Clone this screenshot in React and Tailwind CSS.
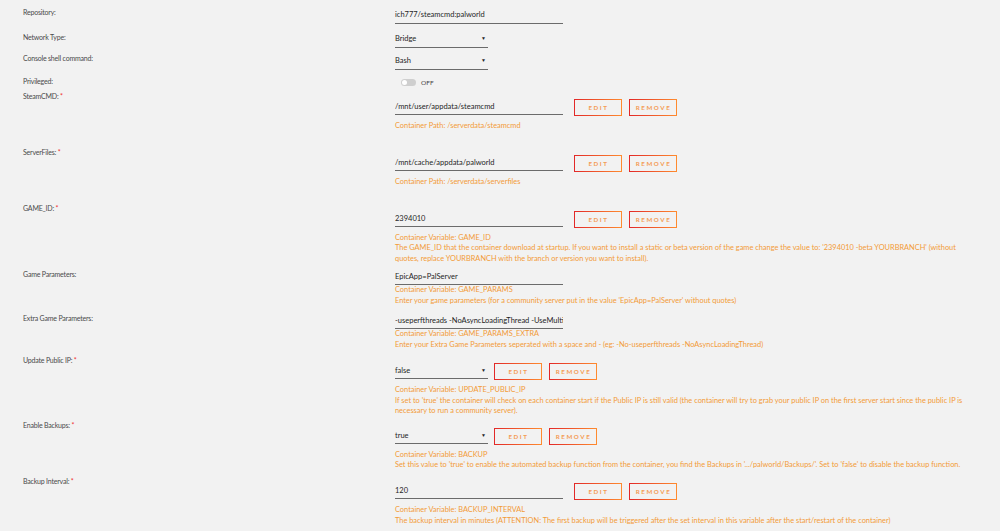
import React from 'react';

const Btn = ({ children }) => (
    <div className="h-[17px] w-[48px] shrink-0 border border-solid [border-image:linear-gradient(90deg,#e22828,#ff8c2f)_1] flex items-center justify-center pl-[1px] text-[6.2px] font-bold tracking-[1.6px] text-[#f49b52]">
        {children}
    </div>
);

const TextInput = ({ value, width = 'w-[168px]' }) => (
    <div className={`${width} h-[16px] shrink-0 border-b border-[#6b6b6b] flex items-center overflow-hidden whitespace-nowrap text-[7.5px] text-[#1f1f1f]`}>
        {value}
    </div>
);

const Select = ({ value }) => (
    <div className="w-[93px] h-[16px] shrink-0 border-b border-[#6b6b6b] flex items-center justify-between pr-[2px] text-[7.5px] text-[#1f1f1f]">
        <span>{value}</span>
        <span className="text-[5px]">▼</span>
    </div>
);

const Help = ({ lines, spaced }) => (
    <div className={`${spaced ? 'mt-[5px]' : ''} text-[7.4px] leading-[10.5px] text-[#f29b38]`}>
        {lines.map((l, i) => (
            <div key={i} className="whitespace-nowrap">{l}</div>
        ))}
    </div>
);

const Row = ({ label, req, rowCls, contentCls = '', children }) => (
    <div className={`flex ${rowCls}`}>
        <div className="w-[395px] shrink-0 pl-[23px] text-[7px] tracking-[-0.2px] leading-[11px] text-[#4a4a4a]">
            {label}
            {req && <span className="text-[#f03030]"> *</span>}
        </div>
        <div className={`flex flex-col ${contentCls}`}>{children}</div>
    </div>
);

const EditRemove = ({ children, gap = 'gap-[11px]' }) => (
    <div className={`flex items-start ${gap}`}>
        {children}
        <div className="flex gap-[7px]">
            <Btn>EDIT</Btn>
            <Btn>REMOVE</Btn>
        </div>
    </div>
);

const App = () => {
    return (
        <div className="bg-[#f2f2f2] w-[1000px] h-[531px] overflow-hidden pt-[7px] font-['Lato',sans-serif]">
            <Row label="Repository:" rowCls="mb-[8px]" contentCls="pt-[0.5px]">
                <TextInput value="ich777/steamcmd:palworld" />
            </Row>
            <Row label="Network Type:" rowCls="mb-[5px]">
                <Select value="Bridge" />
            </Row>
            <Row label="Console shell command:" rowCls="mb-[6px]" contentCls="pt-[1px]">
                <Select value="Bash" />
            </Row>
            <Row label="Privileged:" rowCls="mb-[4px]" contentCls="pt-[2px]">
                <div className="flex items-center gap-[5px] ml-[6px]">
                    <div className="w-[15px] h-[7px] rounded-full bg-[#cfcfcf] flex items-center p-[1px]">
                        <div className="w-[5px] h-[5px] rounded-full bg-white" />
                    </div>
                    <span className="text-[6.5px] text-[#444]">OFF</span>
                </div>
            </Row>
            <Row label="SteamCMD:" req rowCls="mb-[16px]" contentCls="pt-[7.5px]">
                <EditRemove>
                    <TextInput value="/mnt/user/appdata/steamcmd" />
                </EditRemove>
                <Help spaced lines={['Container Path: /serverdata/steamcmd']} />
            </Row>
            <Row label="ServerFiles:" req rowCls="mb-[16px]" contentCls="pt-[7.5px]">
                <EditRemove>
                    <TextInput value="/mnt/cache/appdata/palworld" />
                </EditRemove>
                <Help spaced lines={['Container Path: /serverdata/serverfiles']} />
            </Row>
            <Row label="GAME_ID:" req rowCls="mb-[5px]" contentCls="pt-[7.5px]">
                <EditRemove>
                    <TextInput value="2394010" />
                </EditRemove>
                <Help
                    spaced
                    lines={[
                        'Container Variable: GAME_ID',
                        "The GAME_ID that the container download at startup. If you want to install a static or beta version of the game change the value to: '2394010 -beta YOURBRANCH' (without",
                        'quotes, replace YOURBRANCH with the branch or version you want to install).',
                    ]}
                />
            </Row>
            <Row label="Game Parameters:" rowCls="mb-[7px]">
                <TextInput value="EpicApp=PalServer" />
                <Help
                    lines={[
                        'Container Variable: GAME_PARAMS',
                        "Enter your game parameters (for a community server put in the value 'EpicApp=PalServer' without quotes)",
                    ]}
                />
            </Row>
            <Row label="Extra Game Parameters:" rowCls="mb-[5px]">
                <TextInput value="-useperfthreads -NoAsyncLoadingThread -UseMulti" />
                <Help
                    lines={[
                        'Container Variable: GAME_PARAMS_EXTRA',
                        'Enter your Extra Game Parameters seperated with a space and - (eg: -No-useperfthreads -NoAsyncLoadingThread)',
                    ]}
                />
            </Row>
            <Row label="Update Public IP:" req rowCls="mb-[3px]" contentCls="pt-[8px]">
                <EditRemove gap="gap-[6px]">
                    <Select value="false" />
                </EditRemove>
                <Help
                    spaced
                    lines={[
                        'Container Variable: UPDATE_PUBLIC_IP',
                        "If set to 'true' the container will check on each container start if the Public IP is still valid (the container will try to grab your public IP on the first server start since the public IP is",
                        'necessary to run a community server).',
                    ]}
                />
            </Row>
            <Row label="Enable Backups:" req rowCls="mb-[5px]" contentCls="pt-[8px]">
                <EditRemove gap="gap-[6px]">
                    <Select value="true" />
                </EditRemove>
                <Help
                    spaced
                    lines={[
                        'Container Variable: BACKUP',
                        "Set this value to 'true' to enable the automated backup function from the container, you find the Backups in '.../palworld/Backups/'. Set to 'false' to disable the backup function.",
                    ]}
                />
            </Row>
            <Row label="Backup Interval:" req contentCls="pt-[7.5px]">
                <EditRemove>
                    <TextInput value="120" />
                </EditRemove>
                <Help
                    spaced
                    lines={[
                        'Container Variable: BACKUP_INTERVAL',
                        'The backup interval in minutes (ATTENTION: The first backup will be triggered after the set interval in this variable after the start/restart of the container)',
                    ]}
                />
            </Row>
        </div>
    );
};

export default App;
